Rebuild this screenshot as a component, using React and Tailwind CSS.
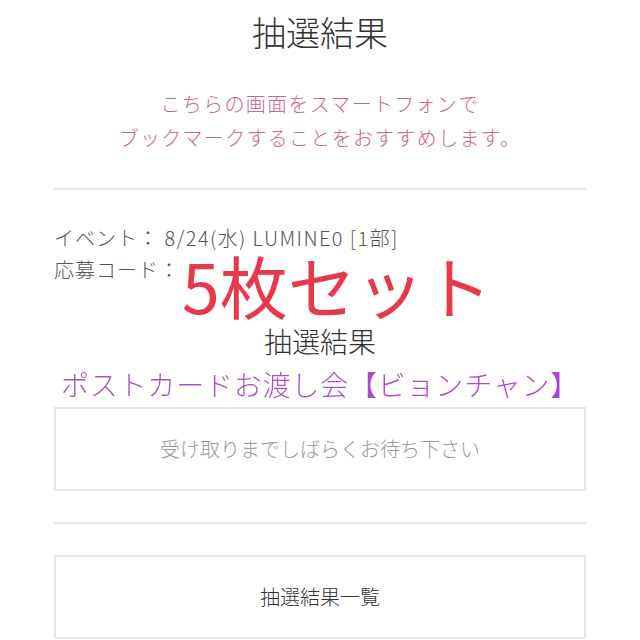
export default function App() {
  return (
    <div
      className="w-[640px] h-[640px] bg-white overflow-hidden text-[#333]"
      style={{ fontFamily: '"Noto Sans CJK JP", "Noto Sans", sans-serif' }}
    >
      <div className="h-[62px] flex items-center justify-center text-[34px] font-light text-[#333]">
        抽選結果
      </div>
      <div className="mt-[25px] text-center text-[20px] leading-[34px] tracking-[1.3px] text-[#c9668a] font-light">
        <p>こちらの画面をスマートフォンで</p>
        <p>ブックマークすることをおすすめします。</p>
      </div>
      <div className="mx-[54px] mt-[33px] h-[2px] bg-[#e8e8e8]" />
      <div className="mx-[54px] mt-[32px] text-[20px] leading-[32px] tracking-[1px] text-[#555] font-light">
        <p>
          イベント： <span className="tracking-[1.4px]">8/24(水) LUMINE0 [1部]</span>
        </p>
        <div className="flex items-start">
          <span>応募コード：</span>
          <span className="ml-[2px] mt-[1px] text-[68px] leading-[60px] tracking-normal text-[#e8394b] font-normal">
            5枚セット
          </span>
        </div>
      </div>
      <div className="mt-[7px] text-center text-[28px] leading-[38px] text-[#333] font-light">
        抽選結果
      </div>
      <div className="mx-[54px] mt-[5px] text-center text-[28px] leading-[38px] tracking-[0.8px] font-light">
        <span className="bg-gradient-to-r from-[#9c58bf] to-[#b23fdc] bg-clip-text text-transparent">
          ポストカードお渡し会【ビョンチャン】
        </span>
      </div>
      <div className="mx-[54px] mt-[4px] h-[84px] border-2 border-[#e6e6e6] flex items-center justify-center text-[20px] text-[#999] font-light">
        受け取りまでしばらくお待ち下さい
      </div>
      <div className="mx-[54px] mt-[31px] h-[2px] bg-[#e8e8e8]" />
      <div className="mx-[54px] mt-[31px] h-[84px] border-2 border-[#e6e6e6] flex items-center justify-center text-[20px] text-[#333] font-light">
        抽選結果一覧
      </div>
    </div>
  );
}
